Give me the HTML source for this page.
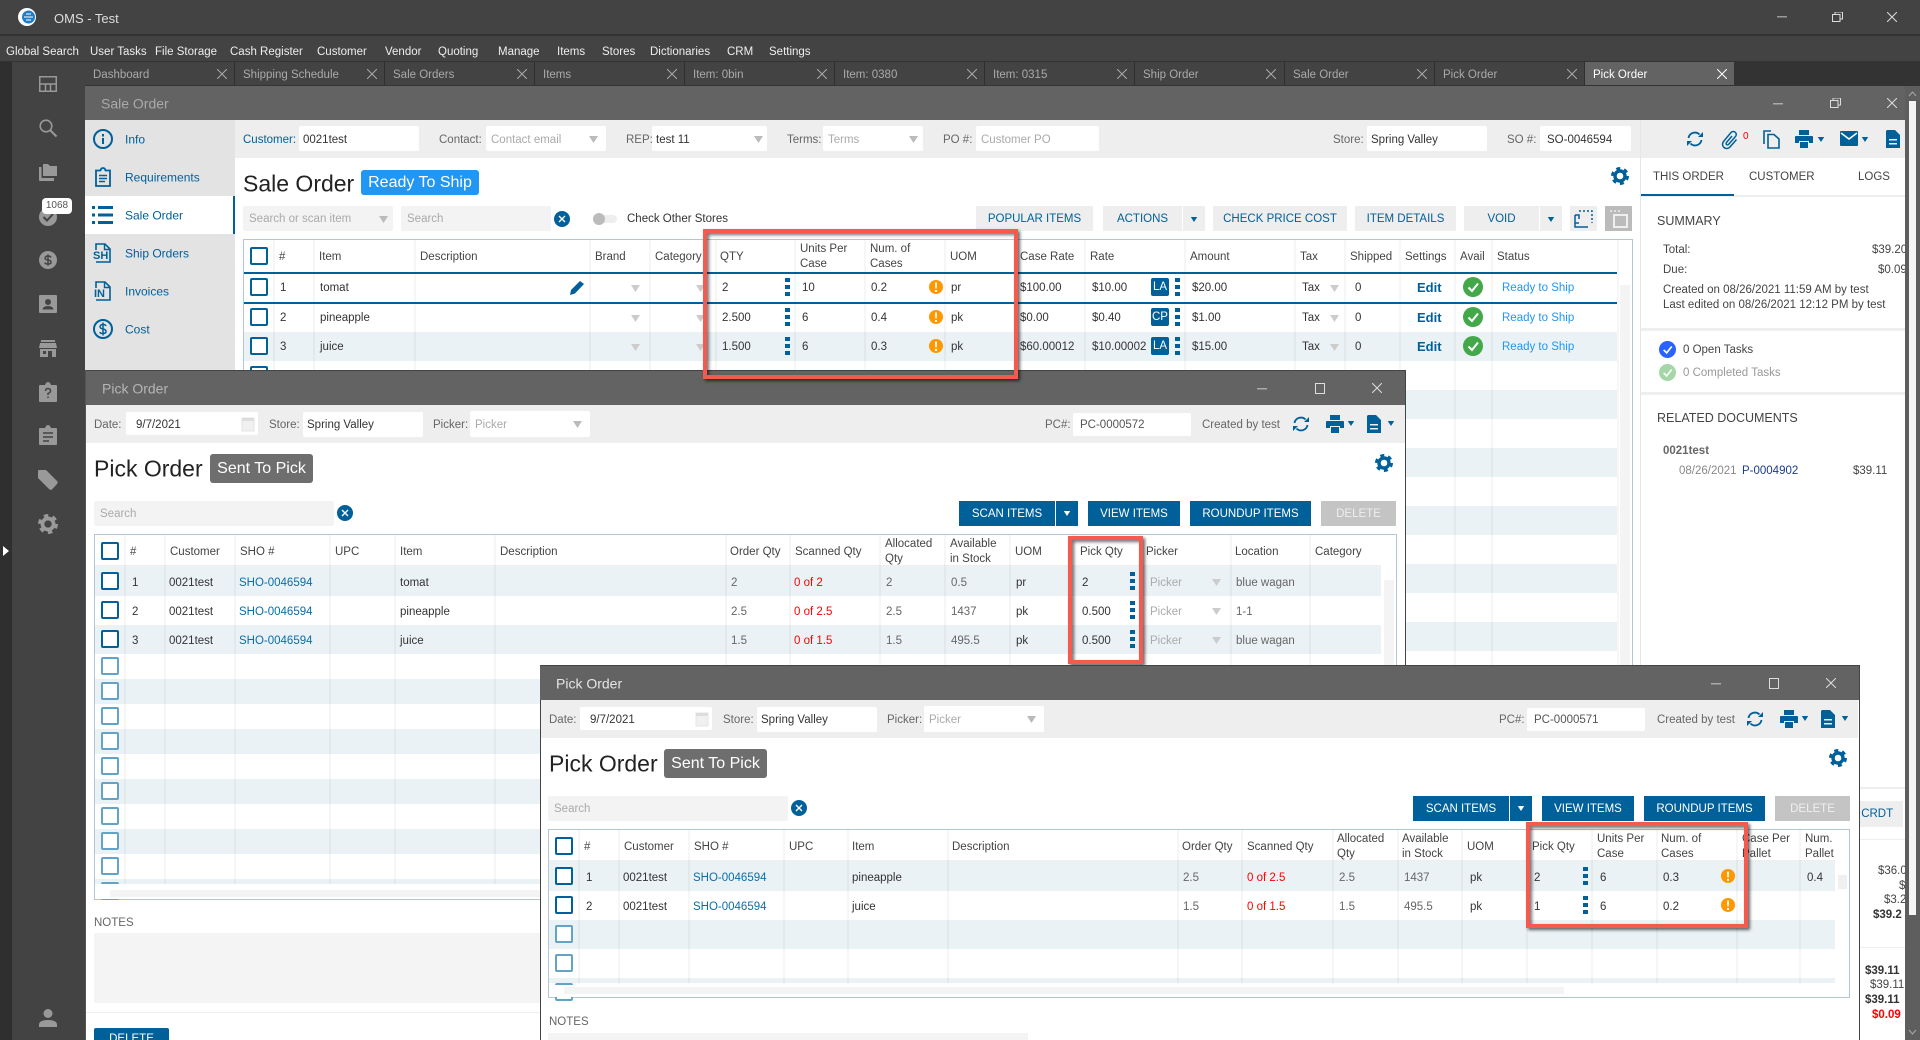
<!DOCTYPE html>
<html lang="en"><head><meta charset="utf-8"><title>OMS - Test</title>
<style>
html,body{margin:0;padding:0;width:1920px;height:1040px;overflow:hidden;background:#434343}
body{position:relative;font:11.5px "Liberation Sans",sans-serif;color:#333}
p{position:absolute;margin:0;white-space:nowrap;transform:translateY(calc(-50% + 1px));line-height:1.25}
.r{position:absolute}
svg{position:absolute;overflow:visible}
.m{color:#eee;top:51px}
.tb{color:#aaa;top:74px}
.f{position:absolute;background:#fff;border-radius:2px}
.l{color:#666}
.ph{color:#aaa}
.bl{color:#00609a}
.h{color:#444}
.cb{position:absolute;width:14px;height:14px;border:2.5px solid #00609a;border-radius:2px;background:#fff}
.cl{border-color:#62a3c6}
.b{position:absolute;background:#eee;color:#00609a;text-align:center;line-height:27px;height:25px;font-size:11.5px;white-space:nowrap;overflow:hidden}
.d{background:#00609a;color:#fff}
.s{position:absolute;background:#ebf2f5}
.v{position:absolute;width:2px;background:rgba(0,0,0,.035)}
.lk{color:#0a6ea8}
.rd{color:#f00}
.red{position:absolute;border:4px solid #f55a4e;box-shadow:2px 2px 3px rgba(0,0,0,.6),inset 2px 2px 3px rgba(0,0,0,.55);box-sizing:border-box}
.tt{font-size:23px;color:#222;transform:translateY(-50%)}
.bd{position:absolute;color:#fff;font-size:16px;text-align:center;border-radius:3px;height:29px;line-height:30px;background:#6e6e6e}
.dg{color:#666}
.ed{color:#00609a;font-size:13px;font-weight:bold}
</style></head><body>
<svg width="0" height="0" style="position:absolute">
<defs>
<symbol id="x" viewBox="0 0 10 10"><path d="M0 0L10 10M10 0L0 10" stroke="currentColor" stroke-width="1" fill="none"/></symbol>
<symbol id="rs" viewBox="0 0 11 10"><path d="M3 2V0H10.5V7H8M.5 2.5H8V9.5H.5Z" stroke="currentColor" stroke-width="1" fill="none"/></symbol>
<symbol id="car" viewBox="0 0 9 7"><path d="M0 0H9L4.5 7Z" fill="currentColor"/></symbol>
<symbol id="dots" viewBox="0 0 5 18"><path d="M0 0H5V4H0ZM0 7H5V11H0ZM0 14H5V18H0Z" fill="#00609a"/></symbol>
<symbol id="warn" viewBox="0 0 14 14"><circle cx="7" cy="7" r="7" fill="#ff9800"/><path d="M6 2.5H8L7.7 8.5H6.3ZM6 10H8V12H6Z" fill="#fff"/></symbol>
<symbol id="ok" viewBox="0 0 20 20"><circle cx="10" cy="10" r="10" fill="#43a84a"/><path d="M5.5 10.5L9 14L15 6.5" stroke="#fff" stroke-width="2" fill="none"/></symbol>
<symbol id="ref" viewBox="0 0 18 18"><path d="M2.5 8A6.5 6.5 0 0 1 13.5 4.5M15.5 10A6.5 6.5 0 0 1 4.5 13.5" stroke="#00609a" stroke-width="1.8" fill="none"/><path d="M12 7H17V2ZM6 11H1V16Z" fill="#00609a"/></symbol>
<symbol id="pr" viewBox="0 0 18 18"><path d="M4 0H14V5H4ZM1 6H17Q18 6 18 7V13H14V11H4V13H0V7Q0 6 1 6ZM5 12H13V18H5Z" fill="#00609a"/></symbol>
<symbol id="doc" viewBox="0 0 14 18"><path d="M1 0H9L14 5V18H0V1ZM3 9V10.5H11V9ZM3 13V14.5H11V13Z" fill="#00609a" fill-rule="evenodd"/></symbol>
<symbol id="gear" viewBox="0 0 18 18"><circle cx="9" cy="9" r="5" fill="none" stroke="#00609a" stroke-width="3.4"/><circle cx="9" cy="9" r="7.6" fill="none" stroke="#00609a" stroke-width="2.8" stroke-dasharray="4 3.96"/></symbol>
<symbol id="xc" viewBox="0 0 16 16"><circle cx="8" cy="8" r="8" fill="#00609a"/><path d="M5 5L11 11M11 5L5 11" stroke="#fff" stroke-width="1.4"/></symbol>
<symbol id="cal" viewBox="0 0 14 16"><path d="M1 2H13V15H1Z" fill="#f0f0f0" stroke="#e6e6e6"/><path d="M1 2H13V5H1Z" fill="#ddd"/></symbol>
</defs></svg>

<!-- shell -->
<div class="r" style="left:0;top:34px;width:1920px;height:2px;background:#333"></div>
<div class="r" style="left:0;top:61px;width:1920px;height:25px;background:#333"></div>
<div class="r" style="left:0;top:62px;width:12px;height:978px;background:#2f2f2f"></div>
<div class="r" style="left:12px;top:62px;width:73px;height:978px;background:#434343"></div>
<svg style="left:18px;top:8px" width="18" height="18" viewBox="0 0 18 18"><circle cx="9" cy="9" r="9" fill="#fff"/><circle cx="10.5" cy="9" r="6.5" fill="#1e7fc8"/><path d="M8 6H13M6 9H15M8 12H13" stroke="#fff" stroke-width="1.1"/></svg>
<p style="left:54px;top:18px;font-size:13px;color:#ddd">OMS - Test</p>
<svg style="left:1777px;top:16px;color:#aaa" width="10" height="2"><rect width="10" height="1.5" fill="#999"/></svg>
<svg style="left:1832px;top:12px;color:#ddd" width="11" height="10"><use href="#rs"/></svg>
<svg style="left:1887px;top:12px;color:#ddd" width="10" height="10"><use href="#x"/></svg>
<p class="m" style="left:6px">Global Search</p><p class="m" style="left:90px">User Tasks</p><p class="m" style="left:155px">File Storage</p><p class="m" style="left:230px">Cash Register</p><p class="m" style="left:317px">Customer</p><p class="m" style="left:385px">Vendor</p><p class="m" style="left:438px">Quoting</p><p class="m" style="left:498px">Manage</p><p class="m" style="left:557px">Items</p><p class="m" style="left:602px">Stores</p><p class="m" style="left:650px">Dictionaries</p><p class="m" style="left:727px">CRM</p><p class="m" style="left:769px">Settings</p>

<!-- tabs -->
<div class="r" style="left:85px;top:62px;width:1500px;height:23px;background:#434343"></div>
<div class="r" style="left:1585px;top:62px;width:149px;height:23px;background:#636363"></div>
<div class="r" style="left:234px;top:62px;width:1px;height:23px;background:#2f2f2f"></div><div class="r" style="left:384px;top:62px;width:1px;height:23px;background:#2f2f2f"></div><div class="r" style="left:534px;top:62px;width:1px;height:23px;background:#2f2f2f"></div><div class="r" style="left:684px;top:62px;width:1px;height:23px;background:#2f2f2f"></div><div class="r" style="left:834px;top:62px;width:1px;height:23px;background:#2f2f2f"></div><div class="r" style="left:984px;top:62px;width:1px;height:23px;background:#2f2f2f"></div><div class="r" style="left:1134px;top:62px;width:1px;height:23px;background:#2f2f2f"></div><div class="r" style="left:1284px;top:62px;width:1px;height:23px;background:#2f2f2f"></div><div class="r" style="left:1434px;top:62px;width:1px;height:23px;background:#2f2f2f"></div><div class="r" style="left:1584px;top:62px;width:1px;height:23px;background:#2f2f2f"></div>
<p class="tb" style="left:93px">Dashboard</p><p class="tb" style="left:243px">Shipping Schedule</p><p class="tb" style="left:393px">Sale Orders</p><p class="tb" style="left:543px">Items</p><p class="tb" style="left:693px">Item: 0bin</p><p class="tb" style="left:843px">Item: 0380</p><p class="tb" style="left:993px">Item: 0315</p><p class="tb" style="left:1143px">Ship Order</p><p class="tb" style="left:1293px">Sale Order</p><p class="tb" style="left:1443px">Pick Order</p><p class="tb" style="left:1593px;color:#fff">Pick Order</p>
<svg style="left:217px;top:69px;color:#aaa" width="10" height="10"><use href="#x"/></svg><svg style="left:367px;top:69px;color:#aaa" width="10" height="10"><use href="#x"/></svg><svg style="left:517px;top:69px;color:#aaa" width="10" height="10"><use href="#x"/></svg><svg style="left:667px;top:69px;color:#aaa" width="10" height="10"><use href="#x"/></svg><svg style="left:817px;top:69px;color:#aaa" width="10" height="10"><use href="#x"/></svg><svg style="left:967px;top:69px;color:#aaa" width="10" height="10"><use href="#x"/></svg><svg style="left:1117px;top:69px;color:#aaa" width="10" height="10"><use href="#x"/></svg><svg style="left:1266px;top:69px;color:#aaa" width="10" height="10"><use href="#x"/></svg><svg style="left:1417px;top:69px;color:#aaa" width="10" height="10"><use href="#x"/></svg><svg style="left:1567px;top:69px;color:#aaa" width="10" height="10"><use href="#x"/></svg><svg style="left:1717px;top:69px;color:#fff" width="10" height="10"><use href="#x"/></svg>

<!-- side nav -->
<svg style="left:39px;top:76px" width="18" height="16" viewBox="0 0 18 16"><path d="M.75.75H17.25V15.25H.75ZM.75 8H17.25M6.5 8V15M11.5 8V15" stroke="#999" stroke-width="1.5" fill="none"/></svg>
<svg style="left:39px;top:119px" width="18" height="18" viewBox="0 0 18 18"><circle cx="7" cy="7" r="5.8" stroke="#999" stroke-width="1.6" fill="none"/><path d="M11 11L17.5 17.5" stroke="#999" stroke-width="2"/></svg>
<svg style="left:39px;top:164px" width="18" height="17" viewBox="0 0 18 17"><path d="M4 0H9L11 2H18V12H4ZM0 3H2.5V14H15V17H1Q0 17 0 16Z" fill="#999"/></svg>
<svg style="left:39px;top:208px" width="18" height="18" viewBox="0 0 18 18"><circle cx="9" cy="9" r="9" fill="#999"/><path d="M4.5 9L8 12.5L14 6" stroke="#434343" stroke-width="2" fill="none"/></svg>
<div class="r" style="left:42px;top:198px;width:30px;height:16px;background:#fff;border-radius:4px;text-align:center;line-height:16px;font-size:10px;color:#555">1068</div>
<svg style="left:39px;top:251px" width="18" height="18" viewBox="0 0 18 18"><circle cx="9" cy="9" r="9" fill="#999"/><path d="M12 6.5Q11.5 5 9 5T6 7Q6 8.7 9 9T12 11.2Q12 13 9 13T6 11.5M9 3.5V14.5" stroke="#434343" stroke-width="1.5" fill="none"/></svg>
<svg style="left:39px;top:295px" width="18" height="18" viewBox="0 0 18 18"><path d="M1 0H17Q18 0 18 1V17Q18 18 17 18H1Q0 18 0 17V1Q0 0 1 0Z" fill="#999"/><circle cx="9" cy="7" r="3" fill="#434343"/><path d="M3.5 14.5Q4 11 9 11T14.5 14.5Z" fill="#434343"/></svg>
<svg style="left:39px;top:340px" width="18" height="17" viewBox="0 0 18 17"><path d="M2 0H16V2H2ZM1 3H17L18 8H0ZM1 9H17V17H13V11H9V17H1ZM4 11V14H7V11Z" fill="#999" fill-rule="evenodd"/></svg>
<svg style="left:39px;top:382px" width="18" height="20" viewBox="0 0 18 20"><path d="M1 3H6Q7 0 9 0T12 3H17Q18 3 18 4V19Q18 20 17 20H1Q0 20 0 19V4Q0 3 1 3Z" fill="#999"/><path d="M6.5 9Q6.5 6.5 9 6.5T11.5 9Q11.5 10.5 9 11.5V13M9 14.5V16" stroke="#434343" stroke-width="1.5" fill="none"/></svg>
<svg style="left:39px;top:425px" width="18" height="20" viewBox="0 0 18 20"><path d="M1 3H6Q7 0 9 0T12 3H17Q18 3 18 4V19Q18 20 17 20H1Q0 20 0 19V4Q0 3 1 3Z" fill="#999"/><path d="M4 8H14M4 12H14M4 16H10" stroke="#434343" stroke-width="1.5"/></svg>
<svg style="left:38px;top:470px" width="20" height="20" viewBox="0 0 20 20"><path d="M1 0H8L19.5 11.5Q20 13 19 14L14 19.5Q13 20 11.5 19.5L0 8V1Q0 0 1 0Z" fill="#999"/></svg>
<svg style="left:38px;top:514px" width="20" height="20" viewBox="0 0 18 18"><circle cx="9" cy="9" r="5" fill="none" stroke="#999" stroke-width="3.4"/><circle cx="9" cy="9" r="7.6" fill="none" stroke="#999" stroke-width="2.8" stroke-dasharray="4 3.96"/></svg>
<svg style="left:3px;top:546px" width="6" height="10"><path d="M0 0L6 5L0 10Z" fill="#fff"/></svg>
<svg style="left:39px;top:1009px" width="18" height="18" viewBox="0 0 18 18"><circle cx="9" cy="4.5" r="4.5" fill="#999"/><path d="M0 18V15Q1 11 9 11T18 15V18Z" fill="#999"/></svg>

<!-- SALE ORDER WINDOW -->
<div class="r" style="left:85px;top:86px;width:1820px;height:954px;background:#fff"></div>
<div class="r" style="left:85px;top:86px;width:1820px;height:34px;background:#636363"></div>
<p style="left:101px;top:103px;font-size:14px;color:#aaa">Sale Order</p>
<svg style="left:1773px;top:103px" width="10" height="2"><rect width="10" height="1.5" fill="#aaa"/></svg>
<svg style="left:1830px;top:98px;color:#ddd" width="11" height="10"><use href="#rs"/></svg>
<svg style="left:1887px;top:98px;color:#ddd" width="10" height="10"><use href="#x"/></svg>
<div class="r" style="left:235px;top:120px;width:1670px;height:38px;background:#eee"></div>
<div class="r" style="left:1640px;top:120px;width:1px;height:920px;background:#e6e6e6"></div>

<!-- left menu -->
<div class="r" style="left:85px;top:120px;width:150px;height:250px;background:#e3e3e3"></div>
<div class="r" style="left:85px;top:196px;width:150px;height:38px;background:#fff"></div>
<div class="r" style="left:233px;top:196px;width:2px;height:38px;background:#00609a"></div>
<p class="bl" style="left:125px;top:139px;font-size:12px">Info</p><p class="bl" style="left:125px;top:177px;font-size:12px">Requirements</p><p class="bl" style="left:125px;top:215px;font-size:12px">Sale Order</p><p class="bl" style="left:125px;top:253px;font-size:12px">Ship Orders</p><p class="bl" style="left:125px;top:291px;font-size:12px">Invoices</p><p class="bl" style="left:125px;top:329px;font-size:12px">Cost</p>
<svg style="left:93px;top:129px" width="20" height="20" viewBox="0 0 20 20"><circle cx="10" cy="10" r="9" stroke="#00609a" stroke-width="2" fill="none"/><path d="M10 5V7.5M10 9V15" stroke="#00609a" stroke-width="2"/></svg>
<svg style="left:95px;top:167px" width="16" height="20" viewBox="0 0 16 20"><path d="M1 3.5H5.5Q6 1 8 1T10.5 3.5H15V19H1Z" stroke="#00609a" stroke-width="1.8" fill="none"/><path d="M4 8.5H12M4 11.5H12M4 14.5H10" stroke="#00609a" stroke-width="1.6"/></svg>
<svg style="left:92px;top:205px" width="21" height="20" viewBox="0 0 21 20"><path d="M0 1H3V4H0ZM6 1H21V4H6ZM0 8.5H3V11.5H0ZM6 8.5H21V11.5H6ZM0 16H3V19H0ZM6 16H21V19H6Z" fill="#00609a"/></svg>
<svg style="left:93px;top:243px" width="20" height="20" viewBox="0 0 20 20"><path d="M3 7V1H12L17 6V19H3" stroke="#00609a" stroke-width="1.6" fill="none"/><path d="M11.5 1V6.500H17" stroke="#00609a" stroke-width="1.4" fill="none"/><text x="0" y="16" font-size="11" font-weight="bold" font-family="Liberation Sans" fill="#00609a">SH</text></svg>
<svg style="left:93px;top:281px" width="20" height="20" viewBox="0 0 20 20"><path d="M3 7V1H12L17 6V19H3" stroke="#00609a" stroke-width="1.6" fill="none"/><path d="M11.5 1V6.500H17" stroke="#00609a" stroke-width="1.4" fill="none"/><text x="1" y="16" font-size="11" font-weight="bold" font-family="Liberation Sans" fill="#00609a">IN</text></svg>
<svg style="left:93px;top:319px" width="20" height="20" viewBox="0 0 20 20"><circle cx="10" cy="10" r="9" stroke="#00609a" stroke-width="2" fill="none"/><path d="M13 7Q12.5 5.5 10 5.5T7 7.5Q7 9.5 10 10T13 12.5Q13 14.5 10 14.5T7 13M10 3.5V16.5" stroke="#00609a" stroke-width="1.5" fill="none"/></svg>

<!-- toolbar fields -->
<p class="bl" style="left:243px;top:139px">Customer:</p><div class="f" style="left:299px;top:126px;width:120px;height:25px"></div><p style="left:303px;top:139px">0021test</p>
<p class="l" style="left:439px;top:139px">Contact:</p><div class="f" style="left:486px;top:126px;width:120px;height:25px"></div><p class="ph" style="left:491px;top:139px">Contact email</p><svg style="left:589px;top:136px;color:#bbb" width="9" height="7"><use href="#car"/></svg>
<p class="l" style="left:626px;top:139px">REP:</p><div class="f" style="left:652px;top:126px;width:115px;height:25px"></div><p style="left:656px;top:139px">test 11</p><svg style="left:754px;top:136px;color:#bbb" width="9" height="7"><use href="#car"/></svg>
<p class="l" style="left:787px;top:139px">Terms:</p><div class="f" style="left:823px;top:126px;width:100px;height:25px"></div><p class="ph" style="left:828px;top:139px">Terms</p><svg style="left:909px;top:136px;color:#bbb" width="9" height="7"><use href="#car"/></svg>
<p class="l" style="left:943px;top:139px">PO #:</p><div class="f" style="left:976px;top:126px;width:123px;height:25px"></div><p class="ph" style="left:981px;top:139px">Customer PO</p>
<p class="l" style="left:1333px;top:139px">Store:</p><div class="f" style="left:1367px;top:126px;width:120px;height:25px"></div><p style="left:1371px;top:139px">Spring Valley</p>
<p class="l" style="left:1507px;top:139px">SO #:</p><div class="f" style="left:1540px;top:126px;width:91px;height:25px"></div><p style="left:1547px;top:139px">SO-0046594</p>
<svg style="left:1686px;top:130px" width="18" height="18"><use href="#ref"/></svg>
<svg style="left:1721px;top:130px" width="17" height="20" viewBox="0 0 17 20"><path d="M11 6L5.5 12.5A1.4 1.400 0 0 0 7.5 14.500L14.500 6.500A3 3 0 0 0 10 2.500L2.500 11.500A4.200 4.200 0 0 0 9 17L15.500 9.500" stroke="#00609a" stroke-width="1.500" fill="none"/></svg>
<p class="rd" style="left:1743px;top:136px;font-size:10px">0</p>
<svg style="left:1763px;top:130px" width="17" height="19" viewBox="0 0 17 19"><path d="M1 14V1H8M5 4.5H11L16 9V18H5Z" stroke="#00609a" stroke-width="1.6" fill="none"/></svg>
<svg style="left:1795px;top:130px" width="18" height="18"><use href="#pr"/></svg><svg style="left:1817px;top:137px;color:#00609a" width="8" height="5"><use href="#car"/></svg>
<svg style="left:1840px;top:131px" width="18" height="15" viewBox="0 0 18 15"><path d="M1 0H17Q18 0 18 1V14Q18 15 17 15H1Q0 15 0 14V1Q0 0 1 0Z" fill="#00609a"/><path d="M1 2L9 8L17 2" stroke="#fff" stroke-width="1.5" fill="none"/></svg><svg style="left:1861px;top:137px;color:#00609a" width="8" height="5"><use href="#car"/></svg>
<svg style="left:1886px;top:130px" width="14" height="18"><use href="#doc"/></svg>

<!-- title row -->
<p class="tt" style="left:243px;top:184px">Sale Order</p>
<div class="bd" style="left:361px;top:170px;width:118px;height:25px;line-height:26px;background:#2196f3">Ready To Ship</div>
<svg style="left:1611px;top:167px" width="18" height="18"><use href="#gear"/></svg>
<div class="r" style="left:243px;top:206px;width:150px;height:25px;background:#f3f3f3;border-radius:2px"></div><p class="ph" style="left:249px;top:218px">Search or scan item</p><svg style="left:379px;top:216px;color:#bbb" width="9" height="7"><use href="#car"/></svg>
<div class="r" style="left:401px;top:206px;width:150px;height:25px;background:#f3f3f3;border-radius:2px"></div><p class="ph" style="left:407px;top:218px">Search</p>
<svg style="left:554px;top:211px" width="16" height="16"><use href="#xc"/></svg>
<div class="r" style="left:593px;top:215px;width:24px;height:8px;background:#eee;border-radius:4px"></div><div class="r" style="left:593px;top:213px;width:12px;height:12px;background:#bbb;border-radius:6px"></div>
<p style="left:627px;top:218px">Check Other Stores</p>
<div class="b" style="left:976px;top:206px;width:117px">POPULAR ITEMS</div>
<div class="b" style="left:1103px;top:206px;width:79px">ACTIONS</div><div class="b" style="left:1183px;top:206px;width:22px"></div><svg style="left:1190px;top:217px;color:#00609a" width="8" height="5"><use href="#car"/></svg>
<div class="b" style="left:1213px;top:206px;width:134px">CHECK PRICE COST</div>
<div class="b" style="left:1355px;top:206px;width:101px">ITEM DETAILS</div>
<div class="b" style="left:1464px;top:206px;width:75px">VOID</div><div class="b" style="left:1540px;top:206px;width:22px"></div><svg style="left:1547px;top:217px;color:#00609a" width="8" height="5"><use href="#car"/></svg>
<div class="b" style="left:1570px;top:206px;width:27px"></div>
<svg style="left:1574px;top:210px" width="19" height="18" viewBox="0 0 19 18"><path d="M5 1H18V13" stroke="#00609a" stroke-width="1.5" stroke-dasharray="2 2" fill="none"/><path d="M1 5V17H14M5 13H1M1 5H5V9" stroke="#00609a" stroke-width="1.5" fill="none"/></svg>
<div class="b" style="left:1605px;top:206px;width:27px;background:#bbb"></div>
<svg style="left:1609px;top:210px" width="19" height="18" viewBox="0 0 19 18"><path d="M1 1H13" stroke="#eee" stroke-width="1.5" stroke-dasharray="2 2" fill="none"/><path d="M5 5H18V17H5Z" stroke="#eee" stroke-width="2" fill="none"/></svg>

<!-- sale table -->
<div class="r" style="left:243px;top:239px;width:1389px;height:1px;background:#b3c6d6"></div>
<div class="r" style="left:243px;top:239px;width:1px;height:131px;background:#b3c6d6"></div>
<div class="r" style="left:1632px;top:239px;width:1px;height:430px;background:#b3c6d6"></div>
<div class="s" style="left:244px;top:332px;width:1373px;height:29px"></div>
<div class="s" style="left:244px;top:390px;width:1373px;height:29px"></div><div class="s" style="left:244px;top:448px;width:1373px;height:29px"></div><div class="s" style="left:244px;top:506px;width:1373px;height:29px"></div><div class="s" style="left:244px;top:564px;width:1373px;height:29px"></div><div class="s" style="left:244px;top:622px;width:1373px;height:29px"></div>
<div class="r" style="left:1620px;top:285px;width:10px;height:380px;background:#f4f4f4"></div>
<div class="r" style="left:244px;top:272px;width:1373px;height:1.5px;background:#00609a"></div>
<div class="r" style="left:244px;top:302px;width:1373px;height:1.5px;background:#00609a"></div>
<div class="v" style="left:273px;top:240px;height:130px"></div><div class="v" style="left:313px;top:240px;height:130px"></div><div class="v" style="left:414px;top:240px;height:130px"></div><div class="v" style="left:589px;top:240px;height:130px"></div><div class="v" style="left:649px;top:240px;height:130px"></div><div class="v" style="left:715px;top:240px;height:130px"></div><div class="v" style="left:794px;top:240px;height:130px"></div><div class="v" style="left:864px;top:240px;height:130px"></div><div class="v" style="left:944px;top:240px;height:130px"></div><div class="v" style="left:1015px;top:240px;height:130px"></div><div class="v" style="left:1084px;top:240px;height:130px"></div><div class="v" style="left:1184px;top:240px;height:130px"></div><div class="v" style="left:1294px;top:240px;height:130px"></div><div class="v" style="left:1344px;top:240px;height:130px"></div><div class="v" style="left:1399px;top:240px;height:130px"></div><div class="v" style="left:1454px;top:240px;height:430px"></div><div class="v" style="left:1491px;top:240px;height:430px"></div><div class="v" style="left:1617px;top:240px;height:430px"></div>
<div class="cb" style="left:250px;top:247px"></div><div class="cb" style="left:250px;top:278px"></div><div class="cb" style="left:250px;top:308px"></div><div class="cb" style="left:250px;top:337px"></div><div class="cb" style="left:250px;top:366px"></div>
<p class="h" style="left:279px;top:256px">#</p><p class="h" style="left:319px;top:256px">Item</p><p class="h" style="left:420px;top:256px">Description</p><p class="h" style="left:595px;top:256px">Brand</p><p class="h" style="left:655px;top:256px">Category</p><p class="h" style="left:720px;top:256px">QTY</p><p class="h" style="left:800px;top:248px">Units Per</p><p class="h" style="left:800px;top:263px">Case</p><p class="h" style="left:870px;top:248px">Num. of</p><p class="h" style="left:870px;top:263px">Cases</p><p class="h" style="left:950px;top:256px">UOM</p><p class="h" style="left:1020px;top:256px">Case Rate</p><p class="h" style="left:1090px;top:256px">Rate</p><p class="h" style="left:1190px;top:256px">Amount</p><p class="h" style="left:1300px;top:256px">Tax</p><p class="h" style="left:1350px;top:256px">Shipped</p><p class="h" style="left:1405px;top:256px">Settings</p><p class="h" style="left:1460px;top:256px">Avail</p><p class="h" style="left:1497px;top:256px">Status</p>

<p style="left:280px;top:287px">1</p><p style="left:320px;top:287px">tomat</p><svg style="left:569px;top:280px" width="16" height="15" viewBox="0 0 16 15"><path d="M1 15L2 10L11 1L15 4L6 13.5Z" fill="#00609a"/></svg>
<p style="left:722px;top:287px">2</p><p style="left:802px;top:287px">10</p><p style="left:871px;top:287px">0.2</p><p style="left:951px;top:287px">pr</p><p style="left:1020px;top:287px">$100.00</p><p style="left:1092px;top:287px">$10.00</p><p style="left:1192px;top:287px">$20.00</p><p style="left:1302px;top:287px">Tax</p><p style="left:1355px;top:287px">0</p>
<p style="left:280px;top:317px">2</p><p style="left:320px;top:317px">pineapple</p>
<p style="left:722px;top:317px">2.500</p><p style="left:802px;top:317px">6</p><p style="left:871px;top:317px">0.4</p><p style="left:951px;top:317px">pk</p><p style="left:1020px;top:317px">$0.00</p><p style="left:1092px;top:317px">$0.40</p><p style="left:1192px;top:317px">$1.00</p><p style="left:1302px;top:317px">Tax</p><p style="left:1355px;top:317px">0</p>
<p style="left:280px;top:346px">3</p><p style="left:320px;top:346px">juice</p>
<p style="left:722px;top:346px">1.500</p><p style="left:802px;top:346px">6</p><p style="left:871px;top:346px">0.3</p><p style="left:951px;top:346px">pk</p><p style="left:1020px;top:346px">$60.00012</p><p style="left:1092px;top:346px">$10.00002</p><p style="left:1192px;top:346px">$15.00</p><p style="left:1302px;top:346px">Tax</p><p style="left:1355px;top:346px">0</p>
<svg style="left:631px;top:285px;color:#ccc" width="9" height="7"><use href="#car"/></svg><svg style="left:631px;top:315px;color:#ccc" width="9" height="7"><use href="#car"/></svg><svg style="left:631px;top:344px;color:#ccc" width="9" height="7"><use href="#car"/></svg>
<svg style="left:696px;top:285px;color:#ccc" width="9" height="7"><use href="#car"/></svg><svg style="left:696px;top:315px;color:#ccc" width="9" height="7"><use href="#car"/></svg><svg style="left:696px;top:344px;color:#ccc" width="9" height="7"><use href="#car"/></svg>
<svg style="left:1330px;top:285px;color:#ccc" width="9" height="7"><use href="#car"/></svg><svg style="left:1330px;top:315px;color:#ccc" width="9" height="7"><use href="#car"/></svg><svg style="left:1330px;top:344px;color:#ccc" width="9" height="7"><use href="#car"/></svg>
<svg style="left:785px;top:278px" width="5" height="18"><use href="#dots"/></svg><svg style="left:785px;top:308px" width="5" height="18"><use href="#dots"/></svg><svg style="left:785px;top:337px" width="5" height="18"><use href="#dots"/></svg>
<svg style="left:929px;top:280px" width="14" height="14"><use href="#warn"/></svg><svg style="left:929px;top:310px" width="14" height="14"><use href="#warn"/></svg><svg style="left:929px;top:339px" width="14" height="14"><use href="#warn"/></svg>
<div class="r" style="left:1151px;top:278px;width:18px;height:18px;background:#00609a;color:#fff;text-align:center;line-height:19px;border-radius:2px">LA</div><div class="r" style="left:1151px;top:308px;width:18px;height:18px;background:#00609a;color:#fff;text-align:center;line-height:19px;border-radius:2px">CP</div><div class="r" style="left:1151px;top:337px;width:18px;height:18px;background:#00609a;color:#fff;text-align:center;line-height:19px;border-radius:2px">LA</div>
<svg style="left:1175px;top:278px" width="5" height="18"><use href="#dots"/></svg><svg style="left:1175px;top:308px" width="5" height="18"><use href="#dots"/></svg><svg style="left:1175px;top:337px" width="5" height="18"><use href="#dots"/></svg>
<p class="ed" style="left:1417px;top:287px">Edit</p><p class="ed" style="left:1417px;top:317px">Edit</p><p class="ed" style="left:1417px;top:346px">Edit</p>
<svg style="left:1463px;top:277px" width="20" height="20"><use href="#ok"/></svg><svg style="left:1463px;top:307px" width="20" height="20"><use href="#ok"/></svg><svg style="left:1463px;top:336px" width="20" height="20"><use href="#ok"/></svg>
<p style="left:1502px;top:287px;color:#2196f3">Ready to Ship</p><p style="left:1502px;top:317px;color:#2196f3">Ready to Ship</p><p style="left:1502px;top:346px;color:#2196f3">Ready to Ship</p>

<!-- right pane -->
<p class="h" style="left:1653px;top:176px">THIS ORDER</p><p class="h" style="left:1749px;top:176px">CUSTOMER</p><p class="h" style="left:1858px;top:176px">LOGS</p>
<div class="r" style="left:1641px;top:195px;width:264px;height:2px;background:#eee"></div><div class="r" style="left:1641px;top:194px;width:93px;height:2px;background:#00609a"></div>
<p class="h" style="left:1657px;top:221px;font-size:12.5px">SUMMARY</p>
<p class="h" style="left:1663px;top:249px">Total:</p><p class="h" style="left:1872px;top:249px">$39.20</p>
<p class="h" style="left:1663px;top:269px">Due:</p><p class="h" style="left:1878px;top:269px">$0.09</p>
<p class="h" style="left:1663px;top:289px">Created on 08/26/2021 11:59 AM by test</p>
<p class="h" style="left:1663px;top:304px">Last edited on 08/26/2021 12:12 PM by test</p>
<div class="r" style="left:1641px;top:328px;width:264px;height:3px;background:#eee"></div>
<svg style="left:1659px;top:341px" width="17" height="17" viewBox="0 0 20 20"><circle cx="10" cy="10" r="10" fill="#2962ff"/><path d="M5.5 10.5L9 14L15 6.5" stroke="#fff" stroke-width="2" fill="none"/></svg><p class="h" style="left:1683px;top:349px">0 Open Tasks</p>
<svg style="left:1659px;top:364px" width="17" height="17" viewBox="0 0 20 20"><circle cx="10" cy="10" r="10" fill="#a5d6a7"/><path d="M5.5 10.5L9 14L15 6.5" stroke="#fff" stroke-width="2" fill="none"/></svg><p style="left:1683px;top:372px;color:#999">0 Completed Tasks</p>
<div class="r" style="left:1641px;top:392px;width:264px;height:3px;background:#eee"></div>
<p class="h" style="left:1657px;top:418px;font-size:12.5px">RELATED DOCUMENTS</p>
<p style="left:1663px;top:450px;color:#666;font-weight:bold">0021test</p>
<p style="left:1679px;top:470px;color:#888">08/26/2021</p><p style="left:1742px;top:470px;color:#1a3c8c">P-0004902</p><p class="h" style="left:1853px;top:470px">$39.11</p>

<!-- right bottom of sale window -->
<div class="r" style="left:1859px;top:787px;width:46px;height:2px;background:#eee"></div>
<div class="b" style="left:1858px;top:801px;width:45px;height:26px;text-align:left;line-height:27px">&nbsp;CRDT</div>
<div class="r" style="left:1859px;top:839px;width:46px;height:1px;background:#eee"></div>
<p class="h" style="left:1878px;top:870px">$36.0</p><p class="h" style="left:1899px;top:885px">$</p><p class="h" style="left:1884px;top:899px">$3.2</p><p style="left:1873px;top:914px;font-weight:bold">$39.2</p>
<div class="r" style="left:1859px;top:947px;width:46px;height:1px;background:#eee"></div>
<p style="left:1865px;top:970px;font-weight:bold">$39.11</p><p class="h" style="left:1870px;top:984px">$39.11</p><p style="left:1865px;top:999px;font-weight:bold">$39.11</p><p class="rd" style="left:1872px;top:1014px;font-weight:bold">$0.09</p>

<!-- PICK ORDER WINDOW 1 -->
<div class="r" style="left:85px;top:370px;width:1320px;height:670px;background:#fff;border-right:1px solid #444"></div>
<div class="r" style="left:85px;top:370px;width:1320px;height:35px;background:#636363;box-shadow:inset 0 1px 0 #444"></div>
<div class="r" style="left:85px;top:370px;width:1px;height:670px;background:#555"></div>
<p style="left:102px;top:388px;font-size:14px;color:#b5b5b5">Pick Order</p>
<svg style="left:1257px;top:388px" width="10" height="2"><rect width="10" height="1.5" fill="#aaa"/></svg>
<div class="r" style="left:1315px;top:383px;width:8px;height:9px;border:1px solid #ddd"></div>
<svg style="left:1372px;top:383px;color:#ddd" width="10" height="10"><use href="#x"/></svg>
<div class="r" style="left:86px;top:405px;width:1319px;height:38px;background:#eee"></div>
<p class="l" style="left:94px;top:424px">Date:</p><div class="f" style="left:126px;top:412px;width:132px;height:23px"></div><p style="left:136px;top:424px">9/7/2021</p><svg style="left:241px;top:416px" width="14" height="16"><use href="#cal"/></svg>
<p class="l" style="left:269px;top:424px">Store:</p><div class="f" style="left:303px;top:412px;width:120px;height:25px"></div><p style="left:307px;top:424px">Spring Valley</p>
<p class="l" style="left:433px;top:424px">Picker:</p><div class="f" style="left:470px;top:411px;width:120px;height:26px"></div><p class="ph" style="left:475px;top:424px">Picker</p><svg style="left:573px;top:421px;color:#bbb" width="9" height="7"><use href="#car"/></svg>
<p class="l" style="left:1045px;top:424px">PC#:</p><div class="f" style="left:1073px;top:413px;width:118px;height:23px"></div><p style="left:1080px;top:424px;color:#555">PC-0000572</p>
<p class="l" style="left:1202px;top:424px">Created by test</p>
<svg style="left:1292px;top:415px" width="18" height="18"><use href="#ref"/></svg>
<svg style="left:1326px;top:415px" width="18" height="18"><use href="#pr"/></svg><svg style="left:1347px;top:421px;color:#00609a" width="8" height="5"><use href="#car"/></svg>
<svg style="left:1367px;top:415px" width="14" height="18"><use href="#doc"/></svg><svg style="left:1387px;top:421px;color:#00609a" width="8" height="5"><use href="#car"/></svg>
<p class="tt" style="left:94px;top:469px">Pick Order</p><div class="bd" style="left:210px;top:454px;width:103px">Sent To Pick</div>
<svg style="left:1375px;top:454px" width="18" height="18"><use href="#gear"/></svg>
<div class="r" style="left:94px;top:501px;width:240px;height:25px;background:#f3f3f3;border-radius:2px"></div><p class="ph" style="left:100px;top:513px">Search</p>
<svg style="left:337px;top:505px" width="16" height="16"><use href="#xc"/></svg>
<div class="b d" style="left:959px;top:501px;width:96px">SCAN ITEMS</div><div class="b d" style="left:1056px;top:501px;width:22px"></div><svg style="left:1063px;top:511px;color:#fff" width="8" height="5"><use href="#car"/></svg>
<div class="b d" style="left:1088px;top:501px;width:92px">VIEW ITEMS</div><div class="b d" style="left:1190px;top:501px;width:121px">ROUNDUP ITEMS</div><div class="b" style="left:1321px;top:501px;width:75px;background:#c4c4c4;color:#eee">DELETE</div>

<div class="r" style="left:94px;top:534px;width:1302px;height:1px;background:#b3c6d6"></div>
<div class="r" style="left:94px;top:534px;width:1px;height:365px;background:#b3c6d6"></div>
<div class="r" style="left:1396px;top:534px;width:1px;height:131px;background:#b3c6d6"></div>
<div class="r" style="left:94px;top:899px;width:446px;height:1px;background:#b3c6d6"></div>
<div class="r" style="left:95px;top:565px;width:1286px;height:1px;background:#eee"></div>
<div class="s" style="left:95px;top:566px;width:1286px;height:30px"></div><div class="s" style="left:95px;top:625px;width:1286px;height:29px"></div><div class="s" style="left:95px;top:679px;width:445px;height:25px"></div><div class="s" style="left:95px;top:729px;width:445px;height:25px"></div><div class="s" style="left:95px;top:779px;width:445px;height:25px"></div><div class="s" style="left:95px;top:829px;width:445px;height:25px"></div><div class="s" style="left:95px;top:879px;width:445px;height:5px"></div>
<div class="r" style="left:1384px;top:580px;width:10px;height:85px;background:#f4f4f4"></div>
<div class="v" style="left:124px;top:535px;height:349px"></div><div class="v" style="left:164px;top:535px;height:349px"></div><div class="v" style="left:234px;top:535px;height:349px"></div><div class="v" style="left:329px;top:535px;height:349px"></div><div class="v" style="left:394px;top:535px;height:349px"></div><div class="v" style="left:494px;top:535px;height:349px"></div><div class="v" style="left:725px;top:535px;height:130px"></div><div class="v" style="left:789px;top:535px;height:130px"></div><div class="v" style="left:879px;top:535px;height:130px"></div><div class="v" style="left:944px;top:535px;height:130px"></div><div class="v" style="left:1009px;top:535px;height:130px"></div><div class="v" style="left:1073px;top:535px;height:130px"></div><div class="v" style="left:1140px;top:535px;height:130px"></div><div class="v" style="left:1230px;top:535px;height:130px"></div><div class="v" style="left:1309px;top:535px;height:130px"></div>
<div class="cb" style="left:101px;top:542px"></div><div class="cb" style="left:101px;top:572px"></div><div class="cb" style="left:101px;top:601px"></div><div class="cb" style="left:101px;top:630px"></div>
<div class="cb cl" style="left:101px;top:657px"></div><div class="cb cl" style="left:101px;top:682px"></div><div class="cb cl" style="left:101px;top:707px"></div><div class="cb cl" style="left:101px;top:732px"></div><div class="cb cl" style="left:101px;top:757px"></div><div class="cb cl" style="left:101px;top:782px"></div><div class="cb cl" style="left:101px;top:807px"></div><div class="cb cl" style="left:101px;top:832px"></div><div class="cb cl" style="left:101px;top:857px"></div><div class="cb cl" style="left:101px;top:882px"></div>
<div class="r" style="left:95px;top:884px;width:445px;height:15px;background:#fff"></div>
<div class="r" style="left:110px;top:890px;width:430px;height:7px;background:#f4f4f4"></div>
<p class="h" style="left:130px;top:551px">#</p><p class="h" style="left:170px;top:551px">Customer</p><p class="h" style="left:240px;top:551px">SHO #</p><p class="h" style="left:335px;top:551px">UPC</p><p class="h" style="left:400px;top:551px">Item</p><p class="h" style="left:500px;top:551px">Description</p><p class="h" style="left:730px;top:551px">Order Qty</p><p class="h" style="left:795px;top:551px">Scanned Qty</p><p class="h" style="left:885px;top:543px">Allocated</p><p class="h" style="left:885px;top:558px">Qty</p><p class="h" style="left:950px;top:543px">Available</p><p class="h" style="left:950px;top:558px">in Stock</p><p class="h" style="left:1015px;top:551px">UOM</p><p class="h" style="left:1080px;top:551px">Pick Qty</p><p class="h" style="left:1146px;top:551px">Picker</p><p class="h" style="left:1235px;top:551px">Location</p><p class="h" style="left:1315px;top:551px">Category</p>
<p style="left:132px;top:582px">1</p><p style="left:169px;top:582px">0021test</p><p class="lk" style="left:239px;top:582px">SHO-0046594</p><p style="left:400px;top:582px">tomat</p><p class="dg" style="left:731px;top:582px">2</p><p class="rd" style="left:794px;top:582px">0 of 2</p><p class="dg" style="left:886px;top:582px">2</p><p class="dg" style="left:951px;top:582px">0.5</p><p style="left:1016px;top:582px">pr</p><p style="left:1082px;top:582px">2</p><p class="ph" style="left:1150px;top:582px">Picker</p><p class="dg" style="left:1236px;top:582px">blue wagan</p>
<p style="left:132px;top:611px">2</p><p style="left:169px;top:611px">0021test</p><p class="lk" style="left:239px;top:611px">SHO-0046594</p><p style="left:400px;top:611px">pineapple</p><p class="dg" style="left:731px;top:611px">2.5</p><p class="rd" style="left:794px;top:611px">0 of 2.5</p><p class="dg" style="left:886px;top:611px">2.5</p><p class="dg" style="left:951px;top:611px">1437</p><p style="left:1016px;top:611px">pk</p><p style="left:1082px;top:611px">0.500</p><p class="ph" style="left:1150px;top:611px">Picker</p><p class="dg" style="left:1236px;top:611px">1-1</p>
<p style="left:132px;top:640px">3</p><p style="left:169px;top:640px">0021test</p><p class="lk" style="left:239px;top:640px">SHO-0046594</p><p style="left:400px;top:640px">juice</p><p class="dg" style="left:731px;top:640px">1.5</p><p class="rd" style="left:794px;top:640px">0 of 1.5</p><p class="dg" style="left:886px;top:640px">1.5</p><p class="dg" style="left:951px;top:640px">495.5</p><p style="left:1016px;top:640px">pk</p><p style="left:1082px;top:640px">0.500</p><p class="ph" style="left:1150px;top:640px">Picker</p><p class="dg" style="left:1236px;top:640px">blue wagan</p>
<svg style="left:1130px;top:572px" width="5" height="18"><use href="#dots"/></svg><svg style="left:1130px;top:601px" width="5" height="18"><use href="#dots"/></svg><svg style="left:1130px;top:630px" width="5" height="18"><use href="#dots"/></svg>
<svg style="left:1212px;top:579px;color:#ccc" width="9" height="7"><use href="#car"/></svg><svg style="left:1212px;top:608px;color:#ccc" width="9" height="7"><use href="#car"/></svg><svg style="left:1212px;top:637px;color:#ccc" width="9" height="7"><use href="#car"/></svg>
<p class="l" style="left:94px;top:922px">NOTES</p>
<div class="r" style="left:94px;top:933px;width:446px;height:70px;background:#f4f4f4"></div>
<div class="r" style="left:86px;top:1012px;width:454px;height:1px;background:#eee"></div>
<div class="b d" style="left:94px;top:1028px;width:75px;height:12px;line-height:23px;border-radius:2px 2px 0 0">DELETE</div>

<div class="red" style="left:703px;top:229px;width:315px;height:150px"></div>
<div class="red" style="left:1068px;top:536px;width:75px;height:128px"></div>

<!-- PICK ORDER WINDOW 2 -->
<div class="r" style="left:540px;top:665px;width:1318px;height:375px;background:#fff;border-left:1px solid #444;border-right:1px solid #444"></div>
<div class="r" style="left:540px;top:665px;width:1319px;height:35px;background:#636363;box-shadow:inset 0 1px 0 #444"></div>
<p style="left:556px;top:683px;font-size:14px;color:#e6e6e6">Pick Order</p>
<svg style="left:1711px;top:683px" width="10" height="2"><rect width="10" height="1.5" fill="#aaa"/></svg>
<div class="r" style="left:1769px;top:678px;width:8px;height:9px;border:1px solid #ddd"></div>
<svg style="left:1826px;top:678px;color:#ddd" width="10" height="10"><use href="#x"/></svg>
<div class="r" style="left:541px;top:700px;width:1317px;height:38px;background:#eee"></div>
<p class="l" style="left:549px;top:719px">Date:</p><div class="f" style="left:580px;top:707px;width:132px;height:23px"></div><p style="left:590px;top:719px">9/7/2021</p><svg style="left:695px;top:711px" width="14" height="16"><use href="#cal"/></svg>
<p class="l" style="left:723px;top:719px">Store:</p><div class="f" style="left:757px;top:707px;width:120px;height:25px"></div><p style="left:761px;top:719px">Spring Valley</p>
<p class="l" style="left:887px;top:719px">Picker:</p><div class="f" style="left:924px;top:706px;width:120px;height:26px"></div><p class="ph" style="left:929px;top:719px">Picker</p><svg style="left:1027px;top:716px;color:#bbb" width="9" height="7"><use href="#car"/></svg>
<p class="l" style="left:1499px;top:719px">PC#:</p><div class="f" style="left:1527px;top:708px;width:118px;height:23px"></div><p style="left:1534px;top:719px;color:#555">PC-0000571</p>
<p class="l" style="left:1657px;top:719px">Created by test</p>
<svg style="left:1746px;top:710px" width="18" height="18"><use href="#ref"/></svg>
<svg style="left:1780px;top:710px" width="18" height="18"><use href="#pr"/></svg><svg style="left:1801px;top:716px;color:#00609a" width="8" height="5"><use href="#car"/></svg>
<svg style="left:1821px;top:710px" width="14" height="18"><use href="#doc"/></svg><svg style="left:1841px;top:716px;color:#00609a" width="8" height="5"><use href="#car"/></svg>
<p class="tt" style="left:549px;top:764px">Pick Order</p><div class="bd" style="left:664px;top:749px;width:103px">Sent To Pick</div>
<svg style="left:1829px;top:749px" width="18" height="18"><use href="#gear"/></svg>
<div class="r" style="left:548px;top:796px;width:240px;height:25px;background:#f3f3f3;border-radius:2px"></div><p class="ph" style="left:554px;top:808px">Search</p>
<svg style="left:791px;top:800px" width="16" height="16"><use href="#xc"/></svg>
<div class="b d" style="left:1413px;top:796px;width:96px">SCAN ITEMS</div><div class="b d" style="left:1510px;top:796px;width:22px"></div><svg style="left:1517px;top:806px;color:#fff" width="8" height="5"><use href="#car"/></svg>
<div class="b d" style="left:1542px;top:796px;width:92px">VIEW ITEMS</div><div class="b d" style="left:1644px;top:796px;width:121px">ROUNDUP ITEMS</div><div class="b" style="left:1775px;top:796px;width:75px;background:#c4c4c4;color:#eee">DELETE</div>

<div class="r" style="left:548px;top:829px;width:1302px;height:169px;border:1px solid #b3c6d6;box-sizing:border-box"></div>
<div class="r" style="left:549px;top:860px;width:1286px;height:1px;background:#eee"></div>
<div class="s" style="left:549px;top:861px;width:1286px;height:30px"></div><div class="s" style="left:549px;top:920px;width:1286px;height:29px"></div><div class="s" style="left:549px;top:978px;width:1286px;height:5px"></div>
<div class="r" style="left:1838px;top:875px;width:9px;height:14px;background:#f0f0f0"></div>
<div class="v" style="left:578px;top:830px;height:153px"></div><div class="v" style="left:618px;top:830px;height:153px"></div><div class="v" style="left:688px;top:830px;height:153px"></div><div class="v" style="left:783px;top:830px;height:153px"></div><div class="v" style="left:847px;top:830px;height:153px"></div><div class="v" style="left:947px;top:830px;height:153px"></div><div class="v" style="left:1177px;top:830px;height:153px"></div><div class="v" style="left:1241px;top:830px;height:153px"></div><div class="v" style="left:1332px;top:830px;height:153px"></div><div class="v" style="left:1397px;top:830px;height:153px"></div><div class="v" style="left:1461px;top:830px;height:153px"></div><div class="v" style="left:1526px;top:830px;height:153px"></div><div class="v" style="left:1591px;top:830px;height:153px"></div><div class="v" style="left:1656px;top:830px;height:153px"></div><div class="v" style="left:1736px;top:830px;height:153px"></div><div class="v" style="left:1799px;top:830px;height:153px"></div>
<div class="cb" style="left:555px;top:837px"></div><div class="cb" style="left:555px;top:867px"></div><div class="cb" style="left:555px;top:896px"></div><div class="cb cl" style="left:555px;top:925px"></div><div class="cb cl" style="left:555px;top:954px"></div><div class="cb cl" style="left:555px;top:983px"></div>
<div class="r" style="left:549px;top:985px;width:1300px;height:12px;background:#fff"></div>
<div class="r" style="left:564px;top:987px;width:1000px;height:7px;background:#f4f4f4"></div>
<p class="h" style="left:584px;top:846px">#</p><p class="h" style="left:624px;top:846px">Customer</p><p class="h" style="left:694px;top:846px">SHO #</p><p class="h" style="left:789px;top:846px">UPC</p><p class="h" style="left:852px;top:846px">Item</p><p class="h" style="left:952px;top:846px">Description</p><p class="h" style="left:1182px;top:846px">Order Qty</p><p class="h" style="left:1247px;top:846px">Scanned Qty</p><p class="h" style="left:1337px;top:838px">Allocated</p><p class="h" style="left:1337px;top:853px">Qty</p><p class="h" style="left:1402px;top:838px">Available</p><p class="h" style="left:1402px;top:853px">in Stock</p><p class="h" style="left:1467px;top:846px">UOM</p><p class="h" style="left:1532px;top:846px">Pick Qty</p><p class="h" style="left:1597px;top:838px">Units Per</p><p class="h" style="left:1597px;top:853px">Case</p><p class="h" style="left:1661px;top:838px">Num. of</p><p class="h" style="left:1661px;top:853px">Cases</p><p class="h" style="left:1742px;top:838px">Case Per</p><p class="h" style="left:1742px;top:853px">Pallet</p><p class="h" style="left:1805px;top:838px">Num.</p><p class="h" style="left:1805px;top:853px">Pallet</p>
<p style="left:586px;top:877px">1</p><p style="left:623px;top:877px">0021test</p><p class="lk" style="left:693px;top:877px">SHO-0046594</p><p style="left:852px;top:877px">pineapple</p><p class="dg" style="left:1183px;top:877px">2.5</p><p class="rd" style="left:1247px;top:877px">0 of 2.5</p><p class="dg" style="left:1339px;top:877px">2.5</p><p class="dg" style="left:1404px;top:877px">1437</p><p style="left:1470px;top:877px">pk</p><p style="left:1534px;top:877px">2</p><p style="left:1600px;top:877px">6</p><p style="left:1663px;top:877px">0.3</p><p style="left:1807px;top:877px">0.4</p>
<p style="left:586px;top:906px">2</p><p style="left:623px;top:906px">0021test</p><p class="lk" style="left:693px;top:906px">SHO-0046594</p><p style="left:852px;top:906px">juice</p><p class="dg" style="left:1183px;top:906px">1.5</p><p class="rd" style="left:1247px;top:906px">0 of 1.5</p><p class="dg" style="left:1339px;top:906px">1.5</p><p class="dg" style="left:1404px;top:906px">495.5</p><p style="left:1470px;top:906px">pk</p><p style="left:1534px;top:906px">1</p><p style="left:1600px;top:906px">6</p><p style="left:1663px;top:906px">0.2</p>
<svg style="left:1583px;top:867px" width="5" height="18"><use href="#dots"/></svg><svg style="left:1583px;top:896px" width="5" height="18"><use href="#dots"/></svg>
<svg style="left:1721px;top:869px" width="14" height="14"><use href="#warn"/></svg><svg style="left:1721px;top:898px" width="14" height="14"><use href="#warn"/></svg>
<p class="l" style="left:549px;top:1021px">NOTES</p>
<div class="r" style="left:548px;top:1033px;width:480px;height:7px;background:#f4f4f4"></div>
<div class="red" style="left:1526px;top:822px;width:222px;height:106px"></div>

<!-- page scrollbar -->
<div class="r" style="left:1905px;top:86px;width:15px;height:954px;background:#5e5e5e"></div>
<div class="r" style="left:1909px;top:101px;width:7px;height:814px;background:#f5f5f5"></div>
<svg style="left:1909px;top:92px" width="7" height="4"><path d="M0 4L3.5 0L7 4" stroke="#aaa" fill="none"/></svg>
<svg style="left:1909px;top:1030px" width="7" height="4"><path d="M0 0L3.5 4L7 0" stroke="#aaa" fill="none"/></svg>
</body></html>
